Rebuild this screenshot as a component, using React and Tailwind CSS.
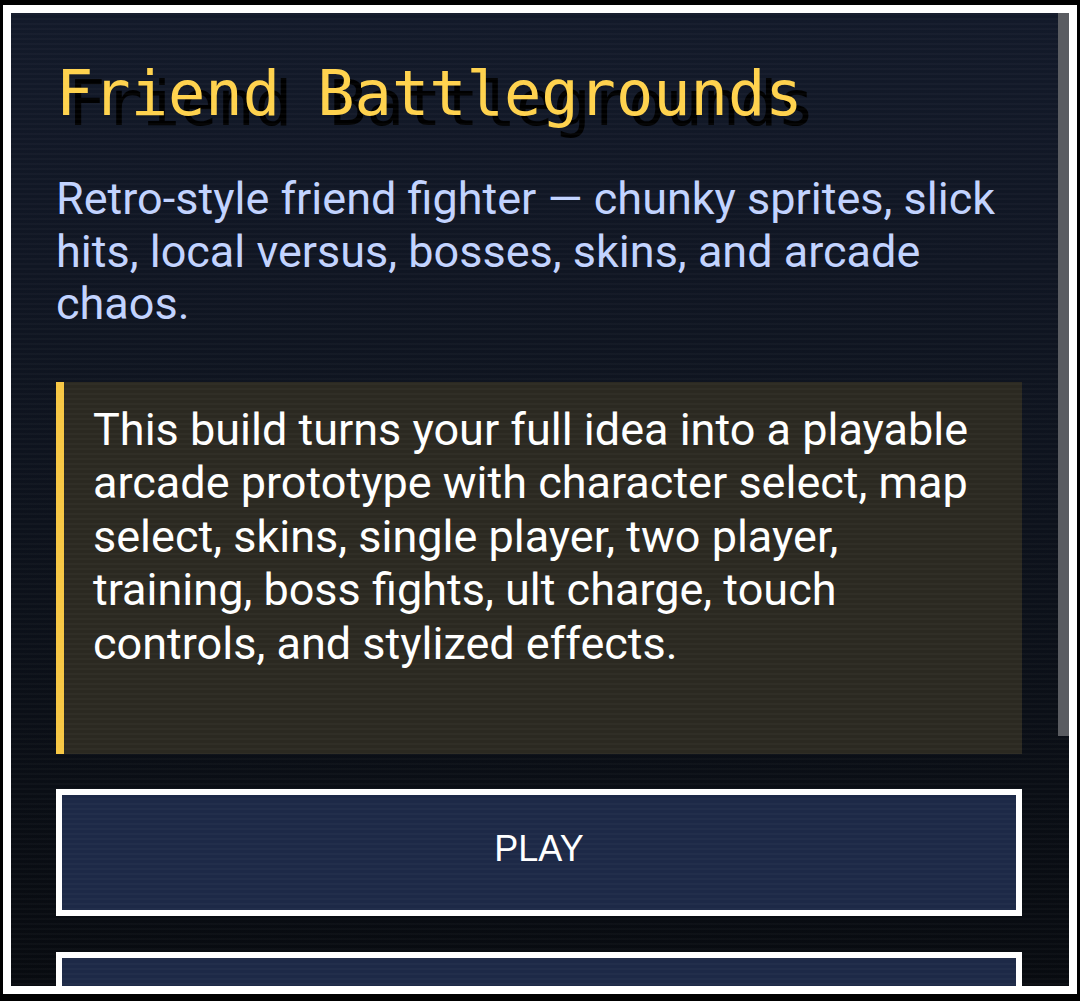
import React from 'react';

const modes = ['PLAY', 'TRAINING'];

const App = () => {
  return (
    <div className="w-[1080px] h-[1001px] bg-black pt-[5px] pl-[3px] pr-[3px] overflow-hidden">
      <div className="border-[8px] border-white h-[989px]">
        <div className="relative h-full overflow-hidden bg-linear-to-b from-[#131a2a] to-[#080b10]">
          {/* content */}
          <div className="pl-[45px] pr-[47px] pt-[50px]">
            <h1
              className="text-[62px] leading-[62px] text-[#ffd24d] whitespace-nowrap [text-shadow:12px_10px_0_#000]"
              style={{ fontFamily: '"DejaVu Sans Mono", monospace' }}
            >
              Friend Battlegrounds
            </h1>
            <p
              className="mt-[48px] text-[45px] leading-[52.5px] text-[#c2d3ff]"
              style={{ fontFamily: 'Roboto, "Noto Sans", sans-serif' }}
            >
              Retro-style friend fighter — chunky sprites, slick hits, local versus, bosses, skins, and arcade chaos.
            </p>

            <div className="mt-[51px] border-l-[8px] border-[#f7c744] bg-[#2b2921] pl-[29px] pr-[32px] pt-[21px] pb-[84px]">
              <p
                className="text-[45px] leading-[53.5px] text-white"
                style={{ fontFamily: 'Roboto, "Noto Sans", sans-serif' }}
              >
                This build turns your full idea into a playable arcade prototype with character select, map select, skins, single player, two player, training, boss fights, ult charge, touch controls, and stylized effects.
              </p>
            </div>

            <div className="mt-[35px] flex flex-col gap-[36px]">
              {modes.map((m) => (
                <button
                  key={m}
                  className="h-[127px] w-full border-[6px] border-white bg-[#1d2947] text-white text-[36px] pb-[8px]"
                  style={{ fontFamily: '"Liberation Sans", Arial, sans-serif' }}
                >
                  {m}
                </button>
              ))}
            </div>
          </div>

          {/* scanlines */}
          <div className="pointer-events-none absolute inset-0 bg-[repeating-linear-gradient(to_bottom,rgba(255,255,255,0.025)_0px,rgba(255,255,255,0.025)_2px,transparent_2px,transparent_5px)]" />

          {/* scrollbar thumb */}
          <div className="absolute right-0 top-0 w-[11px] h-[723px] bg-[#5a5c61]" />
        </div>
      </div>
    </div>
  );
};

export default App;
